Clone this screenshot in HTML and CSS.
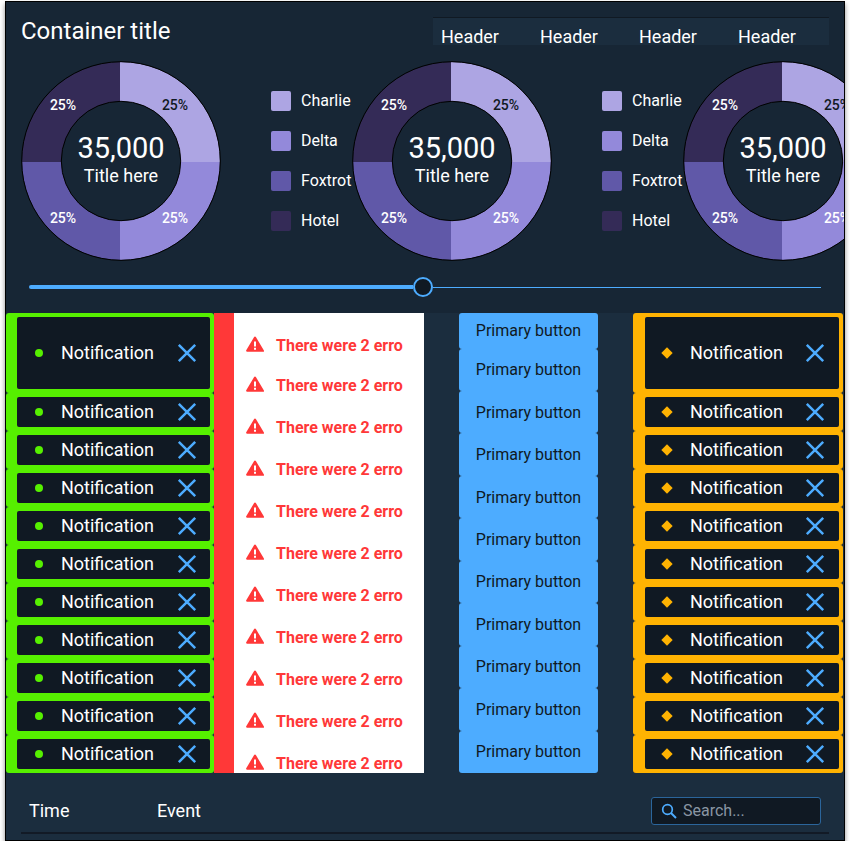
FILE: index.html
```html
<!DOCTYPE html>
<html lang="en">
<head>
<meta charset="utf-8">
<title>Dashboard</title>
<link rel="stylesheet" href="styles.css">
</head>
<body>
<svg class="defs" width="0" height="0" aria-hidden="true">
  <defs><clipPath id="ring-clip"><circle cx="100" cy="100" r="99"/></clipPath></defs>
  <symbol id="close" viewBox="0 0 20 20"><path d="M1.800 1.800 18.200 18.200M18.200 1.800 1.800 18.200" fill="none" stroke="#4dacff" stroke-width="2.500"/></symbol>
  <symbol id="warn" viewBox="0 0 18 16"><path fill-rule="evenodd" d="M9 .5a1 1 0 0 1 .87.5l7.9 13.3a1 1 0 0 1-.86 1.500H1.100a1 1 0 0 1-.87-1.500L8.130 1A1 1 0 0 1 9 .5ZM8 5.500v5h2v-5H8Zm0 6.200v2h2v-2H8Z" fill="#ff3838"/></symbol>
  <symbol id="donut" viewBox="0 0 200 200">
    <g clip-path="url(#ring-clip)">
      <rect x="99" y="0" width="101" height="101" fill="#ada5e3"/>
      <rect x="99" y="101" width="101" height="99" fill="#9389da"/>
      <rect x="0" y="101" width="99" height="99" fill="#6058a8"/>
      <rect x="0" y="0" width="99" height="101" fill="#342b57"/>
    </g>
    <circle cx="100" cy="100" r="99.300" fill="none" stroke="#000" stroke-width="1"/>
    <circle cx="100" cy="100" r="59.700" fill="#172635" stroke="#000" stroke-width="1"/>
  </symbol>
</svg>

<main class="window">
  <section class="top">
    <div class="top-head">
      <h1 class="title">Container title</h1>
      <div class="headers">
        <span class="header-cell">Header</span>
        <span class="header-cell">Header</span>
        <span class="header-cell">Header</span>
        <span class="header-cell">Header</span>
      </div>
    </div>
    <div class="charts">
      <div class="chart-group">
        <div class="donut">
          <svg class="donut-art" width="200" height="200"><use href="#donut"/></svg>
          <span class="pct pct-tr">25%</span><span class="pct pct-br">25%</span><span class="pct pct-bl">25%</span><span class="pct pct-tl">25%</span>
          <div class="donut-center"><span class="donut-value">35,000</span><span class="donut-label">Title here</span></div>
        </div>
        <ul class="legend">
          <li class="legend-item"><i class="swatch swatch-a"></i>Charlie</li>
          <li class="legend-item"><i class="swatch swatch-b"></i>Delta</li>
          <li class="legend-item"><i class="swatch swatch-c"></i>Foxtrot</li>
          <li class="legend-item"><i class="swatch swatch-d"></i>Hotel</li>
        </ul>
      </div>
      <div class="chart-group">
        <div class="donut">
          <svg class="donut-art" width="200" height="200"><use href="#donut"/></svg>
          <span class="pct pct-tr">25%</span><span class="pct pct-br">25%</span><span class="pct pct-bl">25%</span><span class="pct pct-tl">25%</span>
          <div class="donut-center"><span class="donut-value">35,000</span><span class="donut-label">Title here</span></div>
        </div>
        <ul class="legend">
          <li class="legend-item"><i class="swatch swatch-a"></i>Charlie</li>
          <li class="legend-item"><i class="swatch swatch-b"></i>Delta</li>
          <li class="legend-item"><i class="swatch swatch-c"></i>Foxtrot</li>
          <li class="legend-item"><i class="swatch swatch-d"></i>Hotel</li>
        </ul>
      </div>
      <div class="chart-group">
        <div class="donut">
          <svg class="donut-art" width="200" height="200"><use href="#donut"/></svg>
          <span class="pct pct-tr">25%</span><span class="pct pct-br">25%</span><span class="pct pct-bl">25%</span><span class="pct pct-tl">25%</span>
          <div class="donut-center"><span class="donut-value">35,000</span><span class="donut-label">Title here</span></div>
        </div>
      </div>
    </div>
    <div class="slider"><div class="slider-fill"></div><div class="slider-thumb"></div><div class="slider-rest"></div></div>
  </section>

  <section class="middle">
    <div class="notes notes-green">
      <div class="note note-tall"><div class="note-body"><i class="dot"></i><span class="note-text">Notification</span><svg class="x" width="20" height="20"><use href="#close"/></svg></div></div>
      <div class="note"><div class="note-body"><i class="dot"></i><span class="note-text">Notification</span><svg class="x" width="20" height="20"><use href="#close"/></svg></div></div>
      <div class="note"><div class="note-body"><i class="dot"></i><span class="note-text">Notification</span><svg class="x" width="20" height="20"><use href="#close"/></svg></div></div>
      <div class="note"><div class="note-body"><i class="dot"></i><span class="note-text">Notification</span><svg class="x" width="20" height="20"><use href="#close"/></svg></div></div>
      <div class="note"><div class="note-body"><i class="dot"></i><span class="note-text">Notification</span><svg class="x" width="20" height="20"><use href="#close"/></svg></div></div>
      <div class="note"><div class="note-body"><i class="dot"></i><span class="note-text">Notification</span><svg class="x" width="20" height="20"><use href="#close"/></svg></div></div>
      <div class="note"><div class="note-body"><i class="dot"></i><span class="note-text">Notification</span><svg class="x" width="20" height="20"><use href="#close"/></svg></div></div>
      <div class="note"><div class="note-body"><i class="dot"></i><span class="note-text">Notification</span><svg class="x" width="20" height="20"><use href="#close"/></svg></div></div>
      <div class="note"><div class="note-body"><i class="dot"></i><span class="note-text">Notification</span><svg class="x" width="20" height="20"><use href="#close"/></svg></div></div>
      <div class="note"><div class="note-body"><i class="dot"></i><span class="note-text">Notification</span><svg class="x" width="20" height="20"><use href="#close"/></svg></div></div>
      <div class="note"><div class="note-body"><i class="dot"></i><span class="note-text">Notification</span><svg class="x" width="20" height="20"><use href="#close"/></svg></div></div>
    </div>

    <div class="errors">
      <div class="error error-first"><svg class="warn" width="18" height="16"><use href="#warn"/></svg><span class="error-text">There were 2 erro</span></div>
      <div class="error error-second"><svg class="warn" width="18" height="16"><use href="#warn"/></svg><span class="error-text">There were 2 erro</span></div>
      <div class="error"><svg class="warn" width="18" height="16"><use href="#warn"/></svg><span class="error-text">There were 2 erro</span></div>
      <div class="error"><svg class="warn" width="18" height="16"><use href="#warn"/></svg><span class="error-text">There were 2 erro</span></div>
      <div class="error"><svg class="warn" width="18" height="16"><use href="#warn"/></svg><span class="error-text">There were 2 erro</span></div>
      <div class="error"><svg class="warn" width="18" height="16"><use href="#warn"/></svg><span class="error-text">There were 2 erro</span></div>
      <div class="error"><svg class="warn" width="18" height="16"><use href="#warn"/></svg><span class="error-text">There were 2 erro</span></div>
      <div class="error"><svg class="warn" width="18" height="16"><use href="#warn"/></svg><span class="error-text">There were 2 erro</span></div>
      <div class="error"><svg class="warn" width="18" height="16"><use href="#warn"/></svg><span class="error-text">There were 2 erro</span></div>
      <div class="error"><svg class="warn" width="18" height="16"><use href="#warn"/></svg><span class="error-text">There were 2 erro</span></div>
      <div class="error"><svg class="warn" width="18" height="16"><use href="#warn"/></svg><span class="error-text">There were 2 erro</span></div>
    </div>

    <div class="buttons">
      <button class="btn btn-first">Primary button</button>
      <button class="btn">Primary button</button>
      <button class="btn">Primary button</button>
      <button class="btn">Primary button</button>
      <button class="btn">Primary button</button>
      <button class="btn">Primary button</button>
      <button class="btn">Primary button</button>
      <button class="btn">Primary button</button>
      <button class="btn">Primary button</button>
      <button class="btn">Primary button</button>
      <button class="btn">Primary button</button>
    </div>

    <div class="notes notes-orange">
      <div class="note note-tall"><div class="note-body"><i class="diamond"></i><span class="note-text">Notification</span><svg class="x" width="20" height="20"><use href="#close"/></svg></div></div>
      <div class="note"><div class="note-body"><i class="diamond"></i><span class="note-text">Notification</span><svg class="x" width="20" height="20"><use href="#close"/></svg></div></div>
      <div class="note"><div class="note-body"><i class="diamond"></i><span class="note-text">Notification</span><svg class="x" width="20" height="20"><use href="#close"/></svg></div></div>
      <div class="note"><div class="note-body"><i class="diamond"></i><span class="note-text">Notification</span><svg class="x" width="20" height="20"><use href="#close"/></svg></div></div>
      <div class="note"><div class="note-body"><i class="diamond"></i><span class="note-text">Notification</span><svg class="x" width="20" height="20"><use href="#close"/></svg></div></div>
      <div class="note"><div class="note-body"><i class="diamond"></i><span class="note-text">Notification</span><svg class="x" width="20" height="20"><use href="#close"/></svg></div></div>
      <div class="note"><div class="note-body"><i class="diamond"></i><span class="note-text">Notification</span><svg class="x" width="20" height="20"><use href="#close"/></svg></div></div>
      <div class="note"><div class="note-body"><i class="diamond"></i><span class="note-text">Notification</span><svg class="x" width="20" height="20"><use href="#close"/></svg></div></div>
      <div class="note"><div class="note-body"><i class="diamond"></i><span class="note-text">Notification</span><svg class="x" width="20" height="20"><use href="#close"/></svg></div></div>
      <div class="note"><div class="note-body"><i class="diamond"></i><span class="note-text">Notification</span><svg class="x" width="20" height="20"><use href="#close"/></svg></div></div>
      <div class="note"><div class="note-body"><i class="diamond"></i><span class="note-text">Notification</span><svg class="x" width="20" height="20"><use href="#close"/></svg></div></div>
    </div>
  </section>

  <section class="bottom">
    <div class="bottom-row">
      <span class="col-time">Time</span>
      <span class="col-event">Event</span>
      <label class="search">
        <svg class="search-icon" width="16" height="16" viewBox="0 0 16 16"><circle cx="6.500" cy="6.500" r="4.800" fill="none" stroke="#4dacff" stroke-width="1.700"/><path d="M10 10l5 5" stroke="#4dacff" stroke-width="1.900" fill="none"/></svg>
        <span class="search-text">Search...</span>
      </label>
    </div>
  </section>
</main>
</body>
</html>
```

FILE: styles.css
```css
* { box-sizing: border-box; }
html, body { margin: 0; padding: 0; background: #fff; }
body { padding: 1px 0 0 5px; font-family: Roboto, "Liberation Sans", sans-serif; color: #fff; }
.defs { position: absolute; }

.window {
  width: 840px; height: 840px;
  border: 1px solid #000;
  background: #1b2d3e;
  box-shadow: 0 3px 5px rgba(0,0,0,.45);
  display: flex; flex-direction: column;
  overflow: hidden;
}

.top { height: 311px; flex: none; background: #172635; padding: 15px 0 0 15px; }
.top-head { display: flex; justify-content: space-between; height: 44px; }
.title { margin: 0; font-size: 24px; font-weight: 400; line-height: 28px; }
.headers { display: flex; width: 396px; height: 28px; margin-right: 15px; background: #1b2d3e; border-top: 1px solid #101923; padding-left: 8px; }
.header-cell { width: 99px; font-size: 18px; line-height: 20px; padding-top: 9px; flex: none; }

.charts { display: flex; overflow: hidden; height: 200px; }
.chart-group { display: flex; flex: none; width: 331px; }
.donut { position: relative; width: 200px; height: 200px; flex: none; }
.donut-art { display: block; }
.pct { position: absolute; font-size: 14px; font-weight: 500; line-height: 16px; width: 40px; text-align: center; }
.pct-tr { left: 134px; top: 36px; color: #101923; }
.pct-br { left: 134px; top: 149px; }
.pct-bl { left: 22px; top: 149px; }
.pct-tl { left: 22px; top: 36px; }
.donut-center { position: absolute; inset: 40px; display: flex; flex-direction: column; align-items: center; padding-top: 31px; }
.donut-value { font-size: 29px; line-height: 32px; }
.donut-label { font-size: 18px; line-height: 24px; }

.legend { list-style: none; margin: 0 0 0 50px; padding: 30px 0 0; flex: none; width: 81px; }
.legend-item { display: flex; align-items: flex-start; height: 20px; margin-bottom: 20px; font-size: 16px; line-height: 20px; white-space: nowrap; }
.swatch { width: 20px; height: 20px; border-radius: 2px; margin-right: 10px; flex: none; }
.swatch-a { background: #ada5e3; }
.swatch-b { background: #9389da; }
.swatch-c { background: #6058a8; }
.swatch-d { background: #342b57; }

.slider { display: flex; align-items: center; height: 22px; margin: 15px 23px 0 8px; }
.slider-fill { width: 384px; height: 4px; background: #4dacff; border-radius: 2px 0 0 2px; }
.slider-thumb { width: 20px; height: 20px; border: 2px solid #4dacff; border-radius: 50%; background: #101923; flex: none; }
.slider-rest { flex: 1; height: 1px; background: #4dacff; }

.middle { flex: none; height: 460px; display: flex; }

.notes { width: 208px; flex: none; display: flex; flex-direction: column; }
.notes-orange { width: 210px; margin-left: 35px; }
.note { height: 38px; flex: none; border-radius: 3px; padding: 4px 4px 4px 11px; }
.note-tall { height: 80px; }
.note-body { height: 100%; display: flex; align-items: center; background: #101923; border-radius: 2px; padding: 0 13.500px 0 18px; }
.notes-green .note { background: #56f000; }
.notes-orange .note { background: #ffb302; padding-left: 12px; }
.notes-orange .note-body { padding-right: 14px; }
.notes-orange .note-text { margin-left: 19px; }
.dot { width: 8px; height: 8px; border-radius: 50%; background: #56f000; flex: none; }
.diamond { width: 8px; height: 8px; background: #ffb302; transform: rotate(45deg); flex: none; }
.note-text { margin-left: 18px; font-size: 18px; flex: 1; white-space: nowrap; padding-bottom: 2px; }
.x { flex: none; display: block; }

.errors { width: 210px; flex: none; background: #fff; border-left: 20px solid #ff3838; overflow: hidden; padding-left: 12px; display: flex; flex-direction: column; }
.error { height: 42px; flex: none; display: flex; align-items: center; color: #ff3838; font-size: 16px; font-weight: 700; white-space: nowrap; }
.error-first { height: 53px; padding-top: 11px; }
.error-second { height: 40px; padding-bottom: 2px; }
.error-text { margin-left: 12px; }
.warn { flex: none; display: block; margin-bottom: 3px; }

.buttons { width: 139px; margin-left: 35px; flex: none; display: flex; flex-direction: column; }
.btn { font: 400 16px Roboto, "Liberation Sans", sans-serif; color: #101923; background: #4dacff; border: 0; border-radius: 3px; padding: 0; flex: 42.440 0 0; min-height: 0; }
.btn-first { flex: 35.500 0 0; }

.bottom { flex: 1; padding: 0 15px; }
.bottom-row { height: 61px; display: flex; align-items: center; border-bottom: 2px solid #121a26; padding: 17px 8px 0 8px; font-size: 18px; }
.col-time { width: 128px; margin-bottom: 2px; }
.col-event { flex: 1; margin-bottom: 2px; }
.search { width: 170px; height: 28px; display: flex; align-items: center; background: #101923; border: 1px solid #2b659b; border-radius: 3px; padding-left: 9px; }
.search-icon { display: block; flex: none; margin-bottom: 1px; }
.search-text { margin-left: 6px; font-size: 16px; color: #8a96a3; padding-bottom: 2px; }
```
